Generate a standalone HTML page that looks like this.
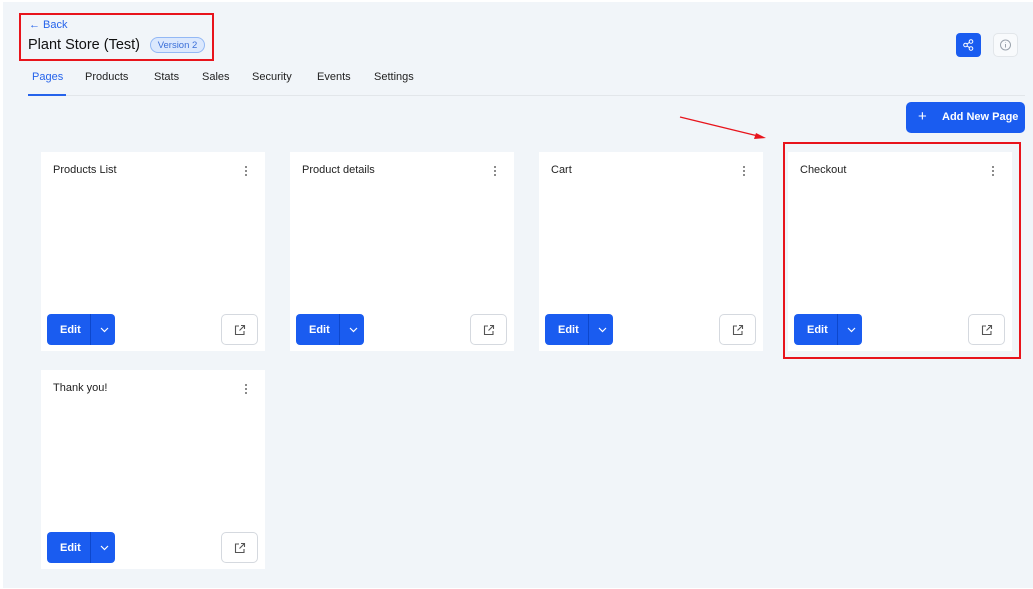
<!DOCTYPE html><html><head><style>
*{box-sizing:border-box;margin:0;padding:0}
body{width:1033px;height:589px;background:#fff;font-family:"Liberation Sans",sans-serif;position:relative;overflow:hidden}
.bg{position:absolute;left:3px;top:2px;width:1030px;height:586px;background:#f1f5f9}
.a{position:absolute}
.card{position:absolute;width:224px;height:199px;background:#fff}
.card .t{position:absolute;left:12px;top:12px;font-size:11px;color:#222}
.card .d{position:absolute;right:18px;top:14px;width:2px}
.card .d i{display:block;width:2px;height:2px;background:#666;border-radius:1px;margin-bottom:2px}
.edit{position:absolute;left:6px;top:162px;width:68px;height:31px;background:#1a5cf0;border-radius:4px;color:#fff;font-size:11px;font-weight:bold}
.edit span{position:absolute;left:13px;top:10px}
.edit b{position:absolute;left:43px;top:0;width:1px;height:31px;background:#0d47cc}
.edit svg{position:absolute;left:53px;top:13px}
.ext{position:absolute;left:180px;top:162px;width:37px;height:31px;border:1px solid #d5d9df;border-radius:5px;background:#fff}
.ext svg{position:absolute;left:12px;top:9px}
.tab{position:absolute;top:71px;font-size:11px;color:#222}
</style></head><body>
<div class="bg"></div>
<div class="a" style="left:19px;top:13px;width:195px;height:48px;border:2px solid #e8141c"></div>
<div class="a" style="left:29px;top:19px;font-size:11px;color:#2563eb">&larr; Back</div>
<div class="a" style="left:28px;top:37px;font-size:14.5px;color:#111">Plant Store (Test)</div>
<div class="a" style="left:150px;top:37px;width:55px;height:16px;border:1px solid #93b8f5;background:#dbe8fd;border-radius:8px;font-size:9.5px;color:#3b6fd8;text-align:center;line-height:15px">Version 2</div>
<div class="tab" style="left:32px;color:#2563eb">Pages</div>
<div class="tab" style="left:85px">Products</div>
<div class="tab" style="left:154px">Stats</div>
<div class="tab" style="left:202px">Sales</div>
<div class="tab" style="left:252px">Security</div>
<div class="tab" style="left:317px">Events</div>
<div class="tab" style="left:374px">Settings</div>
<div class="a" style="left:28px;top:95px;width:997px;height:1px;background:#e2e6ea"></div>
<div class="a" style="left:28px;top:94px;width:38px;height:2px;background:#2563eb"></div>
<div class="a" style="left:956px;top:33px;width:25px;height:24px;background:#1a5cf0;border-radius:4px"><svg width="25" height="24" viewBox="0 0 25 24" fill="none" stroke="#fff" stroke-width="1"><circle cx="15" cy="8.5" r="1.8"/><circle cx="9.5" cy="12" r="1.8"/><circle cx="15" cy="15.5" r="1.8"/><path d="M11 11l2.5-1.6M11 13l2.5 1.6"/></svg></div>
<div class="a" style="left:993px;top:33px;width:25px;height:24px;background:#f8fafc;border:1px solid #e2e6ea;border-radius:5px"><svg width="23" height="22" viewBox="0 0 23 22" fill="none" stroke="#9aa3ad" stroke-width="1"><circle cx="11.5" cy="11" r="5"/><path d="M11.5 10v3.5M11.5 8.3v.5"/></svg></div>
<div class="a" style="left:906px;top:102px;width:119px;height:31px;background:#1a5cf0;border-radius:5px;color:#fff;font-size:11px;font-weight:bold"><span class="a" style="left:12px;top:6px;font-size:15px;font-weight:normal">+</span><span class="a" style="left:36px;top:9px">Add New Page</span></div>
<svg class="a" style="left:0;top:0" width="1033" height="589"><path d="M680 117L758 136" stroke="#e8141c" stroke-width="1.3"/><path d="M766 138l-10 -5 -2 6z" fill="#e8141c"/></svg>
<div class="a" style="left:783px;top:142px;width:238px;height:217px;border:2px solid #e8141c"></div>

<div class="card" style="left:41px;top:152px"><div class="t">Products List</div><div class="d"><i></i><i></i><i></i></div><div class="edit"><span>Edit</span><b></b><svg width="9" height="6" viewBox="0 0 9 6"><path d="M1 1l3.5 3.5L8 1" fill="none" stroke="#fff" stroke-width="1.2"/></svg></div><div class="ext"><svg width="12" height="12" viewBox="0 0 12 12" fill="none" stroke="#555" stroke-width="1.1"><path d="M5 2H1.5v8.5H10V7M7 1.5h3.5V5M10.5 1.5L5.5 6.5"/></svg></div></div>
<div class="card" style="left:290px;top:152px"><div class="t">Product details</div><div class="d"><i></i><i></i><i></i></div><div class="edit"><span>Edit</span><b></b><svg width="9" height="6" viewBox="0 0 9 6"><path d="M1 1l3.5 3.5L8 1" fill="none" stroke="#fff" stroke-width="1.2"/></svg></div><div class="ext"><svg width="12" height="12" viewBox="0 0 12 12" fill="none" stroke="#555" stroke-width="1.1"><path d="M5 2H1.5v8.5H10V7M7 1.5h3.5V5M10.5 1.5L5.5 6.5"/></svg></div></div>
<div class="card" style="left:539px;top:152px"><div class="t">Cart</div><div class="d"><i></i><i></i><i></i></div><div class="edit"><span>Edit</span><b></b><svg width="9" height="6" viewBox="0 0 9 6"><path d="M1 1l3.5 3.5L8 1" fill="none" stroke="#fff" stroke-width="1.2"/></svg></div><div class="ext"><svg width="12" height="12" viewBox="0 0 12 12" fill="none" stroke="#555" stroke-width="1.1"><path d="M5 2H1.5v8.5H10V7M7 1.5h3.5V5M10.5 1.5L5.5 6.5"/></svg></div></div>
<div class="card" style="left:788px;top:152px"><div class="t">Checkout</div><div class="d"><i></i><i></i><i></i></div><div class="edit"><span>Edit</span><b></b><svg width="9" height="6" viewBox="0 0 9 6"><path d="M1 1l3.5 3.5L8 1" fill="none" stroke="#fff" stroke-width="1.2"/></svg></div><div class="ext"><svg width="12" height="12" viewBox="0 0 12 12" fill="none" stroke="#555" stroke-width="1.1"><path d="M5 2H1.5v8.5H10V7M7 1.5h3.5V5M10.5 1.5L5.5 6.5"/></svg></div></div>
<div class="card" style="left:41px;top:370px"><div class="t">Thank you!</div><div class="d"><i></i><i></i><i></i></div><div class="edit"><span>Edit</span><b></b><svg width="9" height="6" viewBox="0 0 9 6"><path d="M1 1l3.5 3.5L8 1" fill="none" stroke="#fff" stroke-width="1.2"/></svg></div><div class="ext"><svg width="12" height="12" viewBox="0 0 12 12" fill="none" stroke="#555" stroke-width="1.1"><path d="M5 2H1.5v8.5H10V7M7 1.5h3.5V5M10.5 1.5L5.5 6.5"/></svg></div></div>
</body></html>
